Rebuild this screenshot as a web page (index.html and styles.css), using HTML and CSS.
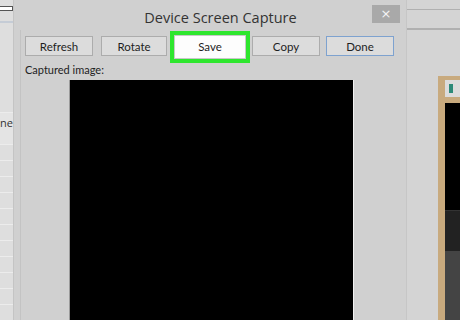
FILE: index.html
```html
<!DOCTYPE html>
<html lang="en">
<head>
    <meta charset="UTF-8">
    <meta name="viewport" content="width=device-width, initial-scale=1.0">
    <title>Device Screen Capture</title>
    <link rel="stylesheet" href="styles.css">
</head>
<body>
    <div class="side-left">
        <div class="side-top">
            <span class="side-icon"></span>
        </div>
        <div class="side-rows">
            <div class="side-row side-row-text">ne</div>
            <div class="side-row"></div>
            <div class="side-row"></div>
            <div class="side-row"></div>
            <div class="side-row"></div>
            <div class="side-row"></div>
            <div class="side-row"></div>
            <div class="side-row"></div>
            <div class="side-row"></div>
            <div class="side-row"></div>
            <div class="side-row"></div>
            <div class="side-row"></div>
        </div>
    </div>

    <div class="dialog">
        <div class="titlebar">
            <span class="title">Device Screen Capture</span>
            <span class="close">&times;</span>
        </div>
        <div class="content">
            <div class="buttons">
                <button class="btn btn-refresh">Refresh</button>
                <button class="btn btn-rotate">Rotate</button>
                <button class="btn btn-save">Save</button>
                <button class="btn btn-copy">Copy</button>
                <button class="btn btn-done">Done</button>
            </div>
            <div class="label">Captured image:</div>
            <div class="capture"></div>
        </div>
    </div>

    <div class="side-right">
        <div class="right-bar"></div>
        <div class="phone">
            <div class="phone-title"><span class="phone-icon"></span></div>
            <div class="phone-gap"></div>
            <div class="screen-black"></div>
            <div class="screen-dark"></div>
            <div class="screen-gray"></div>
        </div>
    </div>
</body>
</html>
```

FILE: styles.css
```css
/* base */
html {
    overflow: hidden;
    background: #d2d2d2;
}

body {
    margin: 0;
    height: 320px;
    overflow: hidden;
    display: flex;
    font-family: "Open Sans", "Noto Sans", sans-serif;
    background: #d2d2d2;
    color: #222;
}

/* window behind, on the left */
.side-left {
    width: 13px;
    flex-shrink: 0;
    background: #dedede;
    border-right: 1px solid #c4c4c4;
    display: flex;
    flex-direction: column;
}

.side-top {
    height: 29px;
    border-bottom: 2px solid #c5ccd6;
    display: flex;
    align-items: center;
}

.side-icon {
    width: 12px;
    height: 3px;
    background: #fff;
    border: 1px solid #555;
    border-left: none;
    margin-top: -4px;
}

.side-rows {
    margin-top: 89px;
}

.side-row {
    height: 15px;
    border-top: 1px solid #ececec;
}

.side-row-text {
    height: 31px;
    font-size: 11px;
    line-height: 20px;
    text-align: right;
    padding-right: 3px;
    color: #333;
    background: #e4e4e4;
}

/* dialog */
.dialog {
    width: 392px;
    flex-shrink: 0;
    background: #d0d0d0;
    border-right: 1px solid #c6c6c6;
    display: flex;
    flex-direction: column;
}

.titlebar {
    height: 31px;
    position: relative;
    display: flex;
    justify-content: center;
    align-items: center;
}

.title {
    font-size: 14.5px;
    color: #333;
    margin-left: 21px;
    margin-top: 4px;
}

.close {
    position: absolute;
    right: 6px;
    top: 5px;
    width: 28px;
    height: 18px;
    background: #a9a9a9;
    color: #f4f4f4;
    font-family: "DejaVu Sans", sans-serif;
    font-size: 13px;
    line-height: 17px;
    text-align: center;
}

.content {
    flex: 1;
    margin-left: 6px;
    border-left: 1px solid #c3c3c3;
    padding-left: 4px;
}

.buttons {
    display: flex;
    align-items: center;
    gap: 6px;
    height: 32px;
}

.btn {
    height: 20px;
    width: 68px;
    padding: 0;
    font-family: Lato, "Open Sans", sans-serif;
    font-size: 11.5px;
    color: #1e1e1e;
    background: #dcdcdc;
    border: 1px solid #acacac;
}

.btn-refresh {
    margin-right: 2px;
}

.btn-rotate {
    width: 66px;
    margin-right: 1px;
}

.btn-save {
    width: 72px;
    height: 24px;
    margin-top: 1px;
    background: #fdfdfd;
    border-color: #c8c8c8;
    outline: 4px solid #2ee62e;
}

.btn-done {
    border-color: #7ea2cf;
}

.label {
    font-family: Lato, "Open Sans", sans-serif;
    font-size: 11px;
    height: 17px;
    line-height: 14px;
    margin-top: 1px;
}

.capture {
    margin-left: 44px;
    width: 283px;
    height: 240px;
    background: #000;
    border-left: 1px solid #9a9a9a;
    border-right: 1px solid #f2f2f2;
}

/* window behind, on the right */
.side-right {
    flex: 1;
    min-width: 0;
    background: #d4d4d4;
    display: flex;
    flex-direction: column;
    overflow: hidden;
}

.right-bar {
    margin-top: 9px;
    height: 18px;
    border-top: 1px solid #b0b0b0;
    border-bottom: 2px solid #b0b0b0;
}

.phone {
    margin-top: 46px;
    margin-left: 31px;
    flex: 1;
    border-left: 7px solid #c8aa7e;
    border-top: 4px solid #c8aa7e;
    display: flex;
    flex-direction: column;
}

.phone-title {
    height: 17px;
    background: #dcdcdc;
    display: flex;
    align-items: center;
    padding-left: 4px;
}

.phone-icon {
    width: 4px;
    height: 9px;
    background: #2d8a78;
}

.phone-gap {
    height: 6px;
    background: #c8aa7e;
}

.screen-black {
    height: 107px;
    background: #000;
}

.screen-dark {
    height: 40px;
    background: #222;
    border-top: 1px solid #333;
}

.screen-gray {
    flex: 1;
    background: #444;
}
```
